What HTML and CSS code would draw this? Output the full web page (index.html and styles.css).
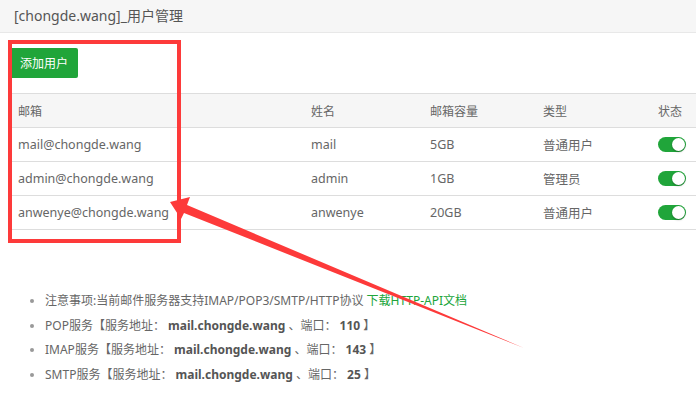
FILE: index.html
```html
<!DOCTYPE html>
<html lang="zh-CN">
<head>
  <meta charset="UTF-8">
  <title>用户管理</title>
  <link rel="stylesheet" href="styles.css">
</head>
<body>
  <div class="page">
    <!-- Title bar -->
    <div class="page-head">[chongde.wang]_用户管理</div>

    <div class="page-body">
      <button class="btn-add">添加用户</button>

      <!-- User list -->
      <table class="user-table">
        <colgroup>
          <col class="col-mail">
          <col class="col-name">
          <col class="col-size">
          <col class="col-type">
          <col>
        </colgroup>
        <thead>
          <tr><th>邮箱</th><th>姓名</th><th>邮箱容量</th><th>类型</th><th>状态</th></tr>
        </thead>
        <tbody>
          <tr>
            <td>mail@chongde.wang</td><td>mail</td><td>5GB</td><td>普通用户</td>
            <td><span class="switch on"></span></td>
          </tr>
          <tr>
            <td>admin@chongde.wang</td><td>admin</td><td>1GB</td><td>管理员</td>
            <td><span class="switch on"></span></td>
          </tr>
          <tr>
            <td>anwenye@chongde.wang</td><td>anwenye</td><td>20GB</td><td>普通用户</td>
            <td><span class="switch on"></span></td>
          </tr>
        </tbody>
      </table>

      <!-- Notes -->
      <ul class="notes">
        <li>注意事项:当前邮件服务器支持IMAP/POP3/SMTP/HTTP协议 <a href="#" class="link">下载HTTP-API文档</a></li>
        <li>POP服务【服务地址： <b>mail.chongde.wang</b> 、端口： <b>110</b> 】</li>
        <li>IMAP服务【服务地址： <b>mail.chongde.wang</b> 、端口： <b>143</b> 】</li>
        <li>SMTP服务【服务地址： <b>mail.chongde.wang</b> 、端口： <b>25</b> 】</li>
      </ul>
    </div>

    <!-- Screenshot annotations -->
    <div class="mark-box"></div>
    <svg class="mark-arrow" width="696" height="397" viewBox="0 0 696 397">
      <polygon points="170,202 190,197 187,205 524,348 184,213 181,219" fill="#fd3a3a"/>
    </svg>
  </div>
</body>
</html>
```

FILE: styles.css
```css
/* Base */
body, html {
  margin: 0;
  padding: 0;
  background: #fff;
  font-family: "Noto Sans", "Noto Sans CJK SC", sans-serif;
  color: #666;
}

.page {
  position: relative;
  width: 696px;
  height: 397px;
  overflow: hidden;
}

/* Title bar */
.page-head {
  height: 32px;
  line-height: 32px;
  padding-left: 14px;
  font-size: 14px;
  color: #555;
  background-color: #f6f6f6;
  border-bottom: 1px solid #e8e8e8;
}

.page-body {
  padding: 15px 0 0 10px;
}

/* Button */
.btn-add {
  display: block;
  height: 30px;
  padding: 0 10px;
  font-family: inherit;
  font-size: 12px;
  color: #fff;
  background-color: #20a53a;
  border: none;
  border-radius: 2px;
  cursor: pointer;
}

/* Table */
.user-table {
  width: 686px;
  margin-top: 15px;
  border-collapse: separate;
  border-spacing: 0;
  table-layout: fixed;
  border-top: 1px solid #ddd;
  font-size: 12.5px;
}

.col-mail { width: 293px; }
.col-name { width: 119px; }
.col-size { width: 113px; }
.col-type { width: 115px; }

.user-table th,
.user-table td {
  height: 33px;
  padding: 0 8px;
  text-align: left;
  font-weight: normal;
  color: #666;
  border-bottom: 1px solid #ddd;
  white-space: nowrap;
  vertical-align: middle;
}

.user-table th {
  font-size: 12px;
  background-color: #f6f6f6;
}

/* Status switch */
.switch {
  display: block;
  width: 28px;
  height: 15px;
  border-radius: 8px;
  background-color: #ccc;
  position: relative;
}

.switch.on {
  background-color: #20a53a;
}

.switch::after {
  content: "";
  position: absolute;
  top: 1px;
  left: 1px;
  width: 13px;
  height: 13px;
  border-radius: 50%;
  background: #fff;
  box-shadow: 0 1px 2px rgba(0, 0, 0, 0.3);
}

.switch.on::after {
  left: 14px;
}

/* Notes list */
.notes {
  margin: 59px 0 0;
  padding-left: 35px;
  font-size: 12px;
  line-height: 24.5px;
  color: #666;
}

.notes li::marker {
  color: #999;
}

.notes b {
  color: #555;
}

.link {
  color: #20a53a;
  text-decoration: none;
}

/* Annotations */
.mark-box {
  position: absolute;
  left: 8px;
  top: 40px;
  width: 165px;
  height: 195px;
  border: 4px solid #fd3a3a;
}

.mark-arrow {
  position: absolute;
  left: 0;
  top: 0;
}
```
